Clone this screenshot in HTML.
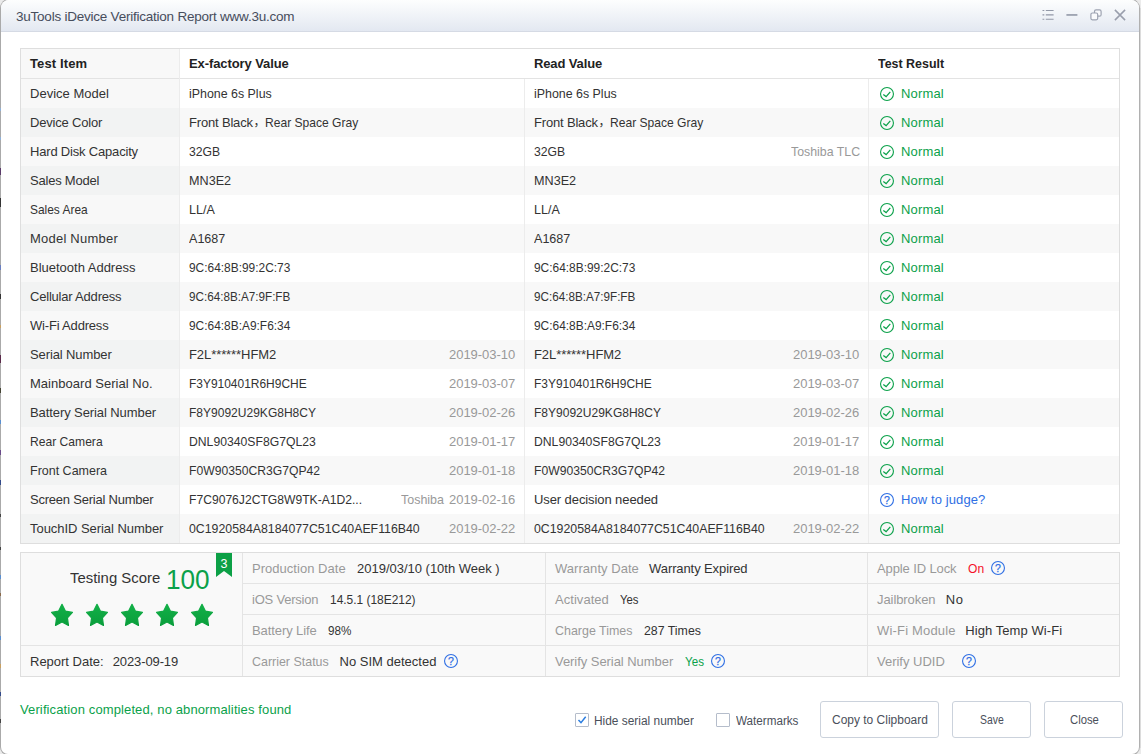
<!DOCTYPE html>
<html><head><meta charset="utf-8"><title>3uTools iDevice Verification Report</title>
<style>
*{margin:0;padding:0;box-sizing:border-box}
html,body{width:1141px;height:754px;overflow:hidden;background:#ebebeb}
body{font-family:"Liberation Sans","Noto Sans CJK SC",sans-serif;font-size:13px;color:#333;position:relative}
.abs,.t{position:absolute}
.t{white-space:nowrap;transform-origin:0 0}
#mk i{position:absolute;left:0;width:1px;display:block}
#win{left:0;top:-1px;width:1140px;height:756px;background:#fff;border:1px solid #aaa;border-right-color:#b0b0b0;border-radius:9px 9px 8px 8px;overflow:hidden}
#rs{left:1140px;top:8px;width:1px;height:740px;background:#dcdcdc}
#tb{left:0;top:0;width:1138px;height:32px;background:linear-gradient(#fdfefe,#e3e8f1);border-bottom:1px solid #d5dae4}
.row{position:absolute;left:21px;width:1098px;height:29px}
.c1{position:absolute;left:0;top:0;width:158px;height:29px}
.hl{position:absolute;background:#e3e3e3;height:1px}
.vl{position:absolute;background:#ececec;width:1px}
.btn{position:absolute;top:701px;height:37px;border:1px solid #cbd2dc;border-radius:3px;background:#fff}
.cb{position:absolute;top:713px;width:14px;height:14px;border:1px solid #b5bdcb;background:#fff;border-radius:1px}
</style></head><body>
<div class="abs" id="win"><div class="abs" id="tb"></div></div><div class="abs" id="rs"></div>
<div id="mk"><i style="top:108px;height:3px;background:#8fb0d8"></i><i style="top:137px;height:3px;background:#8fb0d8"></i><i style="top:168px;height:7px;background:#5a3a6a"></i><i style="top:198px;height:9px;background:#333"></i><i style="top:265px;height:5px;background:#6a7fc0"></i><i style="top:294px;height:5px;background:#333"></i><i style="top:325px;height:3px;background:#c9a060"></i><i style="top:355px;height:8px;background:#5a2a4a"></i><i style="top:388px;height:5px;background:#443"></i><i style="top:420px;height:4px;background:#5a8fd0"></i><i style="top:450px;height:5px;background:#6a4a8a"></i><i style="top:480px;height:5px;background:#334a8a"></i><i style="top:514px;height:3px;background:#444"></i><i style="top:547px;height:3px;background:#444"></i><i style="top:575px;height:4px;background:#5a8fd0"></i><i style="top:593px;height:3px;background:#8a6a4a"></i><i style="top:636px;height:4px;background:#5a8fd0"></i><i style="top:664px;height:4px;background:#c9a060"></i><i style="top:692px;height:4px;background:#334a8a"></i><i style="top:719px;height:4px;background:#444"></i></div>

<svg class="abs" style="left:1036px;top:0" width="100" height="32" viewBox="1036 0 100 32" fill="none" stroke="#9298a7">
<g stroke-width="1.1"><path d="M1045.8 10.5H1053.6M1045.8 14.9H1053.6M1045.8 19.3H1053.6"/><path d="M1042.5 10.5h1.8M1042.5 14.9h1.8M1042.5 19.3h1.8"/></g>
<path d="M1066.4 14.95H1077.4" stroke-width="1.6"/>
<g stroke="#9da3b1" stroke-width="1.2"><rect x="1094.5" y="9.9" width="6.6" height="6.3" rx="1.5" fill="#f8f9fb"/>
<rect x="1090.9" y="13" width="6.8" height="6.8" rx="1.5" fill="#fafbfc"/></g>
<path d="M1114.9 9.9L1125.1 20.1M1125.1 9.9L1114.9 20.1" stroke="#999eac" stroke-width="1.5"/>
</svg>
<div class="abs" style="left:20px;top:48px;width:1100px;height:496px;border:1px solid #dedede"></div>
<div class="abs" style="left:21px;top:49px;width:158px;height:29px;background:#f8f8f8"></div>
<div class="row" style="top:79px;background:#fff"><div class="c1" style="background:#f8f8f8"></div></div>
<div class="row" style="top:108px;background:#f8f8f8"><div class="c1" style="background:#f2f3f3"></div></div>
<div class="row" style="top:137px;background:#fff"><div class="c1" style="background:#f8f8f8"></div></div>
<div class="row" style="top:166px;background:#f8f8f8"><div class="c1" style="background:#f2f3f3"></div></div>
<div class="row" style="top:195px;background:#fff"><div class="c1" style="background:#f8f8f8"></div></div>
<div class="row" style="top:224px;background:#f8f8f8"><div class="c1" style="background:#f2f3f3"></div></div>
<div class="row" style="top:253px;background:#fff"><div class="c1" style="background:#f8f8f8"></div></div>
<div class="row" style="top:282px;background:#f8f8f8"><div class="c1" style="background:#f2f3f3"></div></div>
<div class="row" style="top:311px;background:#fff"><div class="c1" style="background:#f8f8f8"></div></div>
<div class="row" style="top:340px;background:#f8f8f8"><div class="c1" style="background:#f2f3f3"></div></div>
<div class="row" style="top:369px;background:#fff"><div class="c1" style="background:#f8f8f8"></div></div>
<div class="row" style="top:398px;background:#f8f8f8"><div class="c1" style="background:#f2f3f3"></div></div>
<div class="row" style="top:427px;background:#fff"><div class="c1" style="background:#f8f8f8"></div></div>
<div class="row" style="top:456px;background:#f8f8f8"><div class="c1" style="background:#f2f3f3"></div></div>
<div class="row" style="top:485px;background:#fff"><div class="c1" style="background:#f8f8f8"></div></div>
<div class="row" style="top:514px;background:#f8f8f8"><div class="c1" style="background:#f2f3f3"></div></div>
<div class="hl" style="left:21px;top:78px;width:1098px"></div>
<div class="vl" style="left:179px;top:49px;height:494px"></div>
<div class="vl" style="left:524px;top:79px;height:464px"></div>
<div class="vl" style="left:868px;top:79px;height:464px"></div>
<svg class="abs" style="left:879px;top:86px" width="16" height="16" viewBox="0 0 16 16" fill="none" stroke="#0ba14a"><circle cx="8" cy="8" r="6.45" stroke-width="1.1"/><path d="M4.3 8.6L7.1 10.6L11.3 5.9" stroke-width="1.25"/></svg>
<svg class="abs" style="left:879px;top:115px" width="16" height="16" viewBox="0 0 16 16" fill="none" stroke="#0ba14a"><circle cx="8" cy="8" r="6.45" stroke-width="1.1"/><path d="M4.3 8.6L7.1 10.6L11.3 5.9" stroke-width="1.25"/></svg>
<svg class="abs" style="left:879px;top:144px" width="16" height="16" viewBox="0 0 16 16" fill="none" stroke="#0ba14a"><circle cx="8" cy="8" r="6.45" stroke-width="1.1"/><path d="M4.3 8.6L7.1 10.6L11.3 5.9" stroke-width="1.25"/></svg>
<svg class="abs" style="left:879px;top:173px" width="16" height="16" viewBox="0 0 16 16" fill="none" stroke="#0ba14a"><circle cx="8" cy="8" r="6.45" stroke-width="1.1"/><path d="M4.3 8.6L7.1 10.6L11.3 5.9" stroke-width="1.25"/></svg>
<svg class="abs" style="left:879px;top:202px" width="16" height="16" viewBox="0 0 16 16" fill="none" stroke="#0ba14a"><circle cx="8" cy="8" r="6.45" stroke-width="1.1"/><path d="M4.3 8.6L7.1 10.6L11.3 5.9" stroke-width="1.25"/></svg>
<svg class="abs" style="left:879px;top:231px" width="16" height="16" viewBox="0 0 16 16" fill="none" stroke="#0ba14a"><circle cx="8" cy="8" r="6.45" stroke-width="1.1"/><path d="M4.3 8.6L7.1 10.6L11.3 5.9" stroke-width="1.25"/></svg>
<svg class="abs" style="left:879px;top:260px" width="16" height="16" viewBox="0 0 16 16" fill="none" stroke="#0ba14a"><circle cx="8" cy="8" r="6.45" stroke-width="1.1"/><path d="M4.3 8.6L7.1 10.6L11.3 5.9" stroke-width="1.25"/></svg>
<svg class="abs" style="left:879px;top:289px" width="16" height="16" viewBox="0 0 16 16" fill="none" stroke="#0ba14a"><circle cx="8" cy="8" r="6.45" stroke-width="1.1"/><path d="M4.3 8.6L7.1 10.6L11.3 5.9" stroke-width="1.25"/></svg>
<svg class="abs" style="left:879px;top:318px" width="16" height="16" viewBox="0 0 16 16" fill="none" stroke="#0ba14a"><circle cx="8" cy="8" r="6.45" stroke-width="1.1"/><path d="M4.3 8.6L7.1 10.6L11.3 5.9" stroke-width="1.25"/></svg>
<svg class="abs" style="left:879px;top:347px" width="16" height="16" viewBox="0 0 16 16" fill="none" stroke="#0ba14a"><circle cx="8" cy="8" r="6.45" stroke-width="1.1"/><path d="M4.3 8.6L7.1 10.6L11.3 5.9" stroke-width="1.25"/></svg>
<svg class="abs" style="left:879px;top:376px" width="16" height="16" viewBox="0 0 16 16" fill="none" stroke="#0ba14a"><circle cx="8" cy="8" r="6.45" stroke-width="1.1"/><path d="M4.3 8.6L7.1 10.6L11.3 5.9" stroke-width="1.25"/></svg>
<svg class="abs" style="left:879px;top:405px" width="16" height="16" viewBox="0 0 16 16" fill="none" stroke="#0ba14a"><circle cx="8" cy="8" r="6.45" stroke-width="1.1"/><path d="M4.3 8.6L7.1 10.6L11.3 5.9" stroke-width="1.25"/></svg>
<svg class="abs" style="left:879px;top:434px" width="16" height="16" viewBox="0 0 16 16" fill="none" stroke="#0ba14a"><circle cx="8" cy="8" r="6.45" stroke-width="1.1"/><path d="M4.3 8.6L7.1 10.6L11.3 5.9" stroke-width="1.25"/></svg>
<svg class="abs" style="left:879px;top:463px" width="16" height="16" viewBox="0 0 16 16" fill="none" stroke="#0ba14a"><circle cx="8" cy="8" r="6.45" stroke-width="1.1"/><path d="M4.3 8.6L7.1 10.6L11.3 5.9" stroke-width="1.25"/></svg>
<svg class="abs" style="left:879px;top:492px" width="16" height="16" viewBox="0 0 16 16"><circle cx="8" cy="8" r="6.45" fill="none" stroke="#2f6fe4" stroke-width="1.1"/><text x="8" y="11.7" font-size="10.5" text-anchor="middle" fill="#2f6fe4" stroke="#2f6fe4" stroke-width="0.25" font-family="Liberation Sans, sans-serif">?</text></svg>
<svg class="abs" style="left:879px;top:521px" width="16" height="16" viewBox="0 0 16 16" fill="none" stroke="#0ba14a"><circle cx="8" cy="8" r="6.45" stroke-width="1.1"/><path d="M4.3 8.6L7.1 10.6L11.3 5.9" stroke-width="1.25"/></svg>
<div class="abs" style="left:20px;top:552px;width:1100px;height:125px;border:1px solid #dedede;background:#f9f9f9"></div>
<div class="hl" style="left:243px;top:583px;width:876px;background:#e4e4e4"></div>
<div class="hl" style="left:243px;top:614px;width:876px;background:#e4e4e4"></div>
<div class="hl" style="left:21px;top:645px;width:1098px;background:#e4e4e4"></div>
<div class="vl" style="left:242px;top:553px;height:123px;background:#e4e4e4"></div>
<div class="vl" style="left:545px;top:553px;height:123px;background:#e4e4e4"></div>
<div class="vl" style="left:867px;top:553px;height:123px;background:#e4e4e4"></div>
<svg class="abs" style="left:216px;top:553px" width="16" height="24" viewBox="0 0 16 24"><path d="M0 0H16V24L8 18L0 24Z" fill="#0ca046"/><text x="8" y="15" font-size="12.5" fill="#fff" text-anchor="middle" font-family="Liberation Sans, sans-serif">3</text></svg>
<svg class="abs" style="left:0;top:0" width="0" height="0"><defs><linearGradient id="sg" gradientUnits="userSpaceOnUse" x1="0" y1="0" x2="0" y2="26"><stop offset="0" stop-color="#13b148"/><stop offset="1" stop-color="#089b3a"/></linearGradient></defs></svg>
<svg class="abs" style="left:50px;top:602.9px" width="24" height="26" viewBox="0 0 24 26"><path d="M12.00 1.30L15.36 8.08L22.46 9.38L17.44 14.88L18.47 22.47L12.00 19.08L5.53 22.47L6.56 14.88L1.54 9.38L8.64 8.08Z" fill="url(#sg)" stroke="url(#sg)" stroke-width="1.2" stroke-linejoin="round"/></svg>
<svg class="abs" style="left:85px;top:602.9px" width="24" height="26" viewBox="0 0 24 26"><path d="M12.00 1.30L15.36 8.08L22.46 9.38L17.44 14.88L18.47 22.47L12.00 19.08L5.53 22.47L6.56 14.88L1.54 9.38L8.64 8.08Z" fill="url(#sg)" stroke="url(#sg)" stroke-width="1.2" stroke-linejoin="round"/></svg>
<svg class="abs" style="left:120px;top:602.9px" width="24" height="26" viewBox="0 0 24 26"><path d="M12.00 1.30L15.36 8.08L22.46 9.38L17.44 14.88L18.47 22.47L12.00 19.08L5.53 22.47L6.56 14.88L1.54 9.38L8.64 8.08Z" fill="url(#sg)" stroke="url(#sg)" stroke-width="1.2" stroke-linejoin="round"/></svg>
<svg class="abs" style="left:155px;top:602.9px" width="24" height="26" viewBox="0 0 24 26"><path d="M12.00 1.30L15.36 8.08L22.46 9.38L17.44 14.88L18.47 22.47L12.00 19.08L5.53 22.47L6.56 14.88L1.54 9.38L8.64 8.08Z" fill="url(#sg)" stroke="url(#sg)" stroke-width="1.2" stroke-linejoin="round"/></svg>
<svg class="abs" style="left:190px;top:602.9px" width="24" height="26" viewBox="0 0 24 26"><path d="M12.00 1.30L15.36 8.08L22.46 9.38L17.44 14.88L18.47 22.47L12.00 19.08L5.53 22.47L6.56 14.88L1.54 9.38L8.64 8.08Z" fill="url(#sg)" stroke="url(#sg)" stroke-width="1.2" stroke-linejoin="round"/></svg>
<svg class="abs" style="left:443px;top:653px" width="16" height="16" viewBox="0 0 16 16"><circle cx="8" cy="8" r="6.45" fill="none" stroke="#2f6fe4" stroke-width="1.1"/><text x="8" y="11.7" font-size="10.5" text-anchor="middle" fill="#2f6fe4" stroke="#2f6fe4" stroke-width="0.25" font-family="Liberation Sans, sans-serif">?</text></svg>
<svg class="abs" style="left:710px;top:653px" width="16" height="16" viewBox="0 0 16 16"><circle cx="8" cy="8" r="6.45" fill="none" stroke="#2f6fe4" stroke-width="1.1"/><text x="8" y="11.7" font-size="10.5" text-anchor="middle" fill="#2f6fe4" stroke="#2f6fe4" stroke-width="0.25" font-family="Liberation Sans, sans-serif">?</text></svg>
<svg class="abs" style="left:990px;top:560px" width="16" height="16" viewBox="0 0 16 16"><circle cx="8" cy="8" r="6.45" fill="none" stroke="#2f6fe4" stroke-width="1.1"/><text x="8" y="11.7" font-size="10.5" text-anchor="middle" fill="#2f6fe4" stroke="#2f6fe4" stroke-width="0.25" font-family="Liberation Sans, sans-serif">?</text></svg>
<svg class="abs" style="left:961px;top:653px" width="16" height="16" viewBox="0 0 16 16"><circle cx="8" cy="8" r="6.45" fill="none" stroke="#2f6fe4" stroke-width="1.1"/><text x="8" y="11.7" font-size="10.5" text-anchor="middle" fill="#2f6fe4" stroke="#2f6fe4" stroke-width="0.25" font-family="Liberation Sans, sans-serif">?</text></svg>
<div class="cb" style="left:575px"><svg width="12" height="12" viewBox="0 0 12 12" style="position:absolute;left:0;top:0"><path d="M2.5 6L5 8.7L9.7 2.8" fill="none" stroke="#2b7de0" stroke-width="1.5"/></svg></div>
<div class="cb" style="left:716px"></div>
<div class="btn" style="left:820px;width:119px"></div>
<div class="btn" style="left:952px;width:79px"></div>
<div class="btn" style="left:1044px;width:79px"></div>
<div class="t" style="left:16.00px;top:7.90px;line-height:18px;height:18px;font-size:13.5px;color:#474d5c;letter-spacing:-0.230px">3uTools iDevice Verification Report www.3u.com</div>
<div class="t" style="left:30.00px;top:55.00px;line-height:17px;height:17px;font-weight:bold;color:#222;letter-spacing:0.132px">Test Item</div>
<div class="t" style="left:189.00px;top:55.00px;line-height:17px;height:17px;font-weight:bold;color:#222;letter-spacing:-0.088px">Ex-factory Value</div>
<div class="t" style="left:534.00px;top:55.00px;line-height:17px;height:17px;font-weight:bold;color:#222;letter-spacing:-0.126px">Read Value</div>
<div class="t" style="left:878.00px;top:55.00px;line-height:17px;height:17px;font-weight:bold;color:#222;transform:scaleX(0.9573)">Test Result</div>
<div class="t" style="left:30.00px;top:85.00px;line-height:17px;height:17px;letter-spacing:0.012px">Device Model</div>
<div class="t" style="left:189.00px;top:85.00px;line-height:17px;height:17px;transform:scaleX(0.9539)">iPhone 6s Plus</div>
<div class="t" style="left:534.00px;top:85.00px;line-height:17px;height:17px;transform:scaleX(0.9539)">iPhone 6s Plus</div>
<div class="t" style="left:901.00px;top:85.00px;line-height:17px;height:17px;color:#0ba14a;letter-spacing:0.159px">Normal</div>
<div class="t" style="left:30.00px;top:114.00px;line-height:17px;height:17px;letter-spacing:-0.189px">Device Color</div>
<div class="t" style="left:189.00px;top:114.00px;line-height:17px;height:17px;letter-spacing:-0.174px">Front Black</div>
<div class="t" style="left:253.40px;top:114.40px;line-height:16px;height:16px;font-size:12px">，</div>
<div class="t" style="left:264.67px;top:114.00px;line-height:17px;height:17px;transform:scaleX(0.9286)">Rear Space Gray</div>
<div class="t" style="left:534.00px;top:114.00px;line-height:17px;height:17px;letter-spacing:-0.174px">Front Black</div>
<div class="t" style="left:598.40px;top:114.40px;line-height:16px;height:16px;font-size:12px">，</div>
<div class="t" style="left:609.67px;top:114.00px;line-height:17px;height:17px;transform:scaleX(0.9286)">Rear Space Gray</div>
<div class="t" style="left:901.00px;top:114.00px;line-height:17px;height:17px;color:#0ba14a;letter-spacing:0.159px">Normal</div>
<div class="t" style="left:30.00px;top:143.00px;line-height:17px;height:17px;letter-spacing:-0.186px">Hard Disk Capacity</div>
<div class="t" style="left:189.00px;top:143.00px;line-height:17px;height:17px;transform:scaleX(0.9364)">32GB</div>
<div class="t" style="left:534.00px;top:143.00px;line-height:17px;height:17px;transform:scaleX(0.9364)">32GB</div>
<div class="t" style="left:790.50px;top:143.00px;line-height:17px;height:17px;color:#999;transform:scaleX(0.9492)">Toshiba TLC</div>
<div class="t" style="left:901.00px;top:143.00px;line-height:17px;height:17px;color:#0ba14a;letter-spacing:0.159px">Normal</div>
<div class="t" style="left:30.00px;top:172.00px;line-height:17px;height:17px;letter-spacing:-0.215px">Sales Model</div>
<div class="t" style="left:189.03px;top:172.00px;line-height:17px;height:17px;transform:scaleX(0.9711)">MN3E2</div>
<div class="t" style="left:534.03px;top:172.00px;line-height:17px;height:17px;transform:scaleX(0.9711)">MN3E2</div>
<div class="t" style="left:901.00px;top:172.00px;line-height:17px;height:17px;color:#0ba14a;letter-spacing:0.159px">Normal</div>
<div class="t" style="left:30.00px;top:201.00px;line-height:17px;height:17px;transform:scaleX(0.9167)">Sales Area</div>
<div class="t" style="left:189.04px;top:201.00px;line-height:17px;height:17px;transform:scaleX(0.9627)">LL/A</div>
<div class="t" style="left:534.04px;top:201.00px;line-height:17px;height:17px;transform:scaleX(0.9627)">LL/A</div>
<div class="t" style="left:901.00px;top:201.00px;line-height:17px;height:17px;color:#0ba14a;letter-spacing:0.159px">Normal</div>
<div class="t" style="left:30.00px;top:230.00px;line-height:17px;height:17px;letter-spacing:0.225px">Model Number</div>
<div class="t" style="left:189.00px;top:230.00px;line-height:17px;height:17px;transform:scaleX(0.9663)">A1687</div>
<div class="t" style="left:534.00px;top:230.00px;line-height:17px;height:17px;transform:scaleX(0.9663)">A1687</div>
<div class="t" style="left:901.00px;top:230.00px;line-height:17px;height:17px;color:#0ba14a;letter-spacing:0.159px">Normal</div>
<div class="t" style="left:30.00px;top:259.00px;line-height:17px;height:17px;letter-spacing:-0.008px">Bluetooth Address</div>
<div class="t" style="left:189.00px;top:259.00px;line-height:17px;height:17px;transform:scaleX(0.9162)">9C:64:8B:99:2C:73</div>
<div class="t" style="left:534.00px;top:259.00px;line-height:17px;height:17px;transform:scaleX(0.9162)">9C:64:8B:99:2C:73</div>
<div class="t" style="left:901.00px;top:259.00px;line-height:17px;height:17px;color:#0ba14a;letter-spacing:0.159px">Normal</div>
<div class="t" style="left:30.00px;top:288.00px;line-height:17px;height:17px;letter-spacing:-0.205px">Cellular Address</div>
<div class="t" style="left:189.00px;top:288.00px;line-height:17px;height:17px;transform:scaleX(0.8987)">9C:64:8B:A7:9F:FB</div>
<div class="t" style="left:534.00px;top:288.00px;line-height:17px;height:17px;transform:scaleX(0.8987)">9C:64:8B:A7:9F:FB</div>
<div class="t" style="left:901.00px;top:288.00px;line-height:17px;height:17px;color:#0ba14a;letter-spacing:0.159px">Normal</div>
<div class="t" style="left:30.00px;top:317.00px;line-height:17px;height:17px;letter-spacing:-0.185px">Wi-Fi Address</div>
<div class="t" style="left:189.00px;top:317.00px;line-height:17px;height:17px;transform:scaleX(0.9163)">9C:64:8B:A9:F6:34</div>
<div class="t" style="left:534.00px;top:317.00px;line-height:17px;height:17px;transform:scaleX(0.9163)">9C:64:8B:A9:F6:34</div>
<div class="t" style="left:901.00px;top:317.00px;line-height:17px;height:17px;color:#0ba14a;letter-spacing:0.159px">Normal</div>
<div class="t" style="left:30.00px;top:346.00px;line-height:17px;height:17px;letter-spacing:-0.113px">Serial Number</div>
<div class="t" style="left:189.00px;top:346.00px;line-height:17px;height:17px;letter-spacing:-0.076px">F2L******HFM2</div>
<div class="t" style="left:534.00px;top:346.00px;line-height:17px;height:17px;letter-spacing:-0.076px">F2L******HFM2</div>
<div class="t" style="left:449.00px;top:346.00px;line-height:17px;height:17px;color:#999;letter-spacing:-0.030px">2019-03-10</div>
<div class="t" style="left:793.00px;top:346.00px;line-height:17px;height:17px;color:#999;letter-spacing:-0.030px">2019-03-10</div>
<div class="t" style="left:901.00px;top:346.00px;line-height:17px;height:17px;color:#0ba14a;letter-spacing:0.159px">Normal</div>
<div class="t" style="left:30.00px;top:375.00px;line-height:17px;height:17px;letter-spacing:0.026px">Mainboard Serial No.</div>
<div class="t" style="left:189.08px;top:375.00px;line-height:17px;height:17px;transform:scaleX(0.9196)">F3Y910401R6H9CHE</div>
<div class="t" style="left:534.08px;top:375.00px;line-height:17px;height:17px;transform:scaleX(0.9196)">F3Y910401R6H9CHE</div>
<div class="t" style="left:449.00px;top:375.00px;line-height:17px;height:17px;color:#999;letter-spacing:-0.030px">2019-03-07</div>
<div class="t" style="left:793.00px;top:375.00px;line-height:17px;height:17px;color:#999;letter-spacing:-0.030px">2019-03-07</div>
<div class="t" style="left:901.00px;top:375.00px;line-height:17px;height:17px;color:#0ba14a;letter-spacing:0.159px">Normal</div>
<div class="t" style="left:30.00px;top:404.00px;line-height:17px;height:17px;letter-spacing:-0.088px">Battery Serial Number</div>
<div class="t" style="left:189.07px;top:404.00px;line-height:17px;height:17px;transform:scaleX(0.9251)">F8Y9092U29KG8H8CY</div>
<div class="t" style="left:534.07px;top:404.00px;line-height:17px;height:17px;transform:scaleX(0.9251)">F8Y9092U29KG8H8CY</div>
<div class="t" style="left:449.00px;top:404.00px;line-height:17px;height:17px;color:#999;letter-spacing:-0.030px">2019-02-26</div>
<div class="t" style="left:793.00px;top:404.00px;line-height:17px;height:17px;color:#999;letter-spacing:-0.030px">2019-02-26</div>
<div class="t" style="left:901.00px;top:404.00px;line-height:17px;height:17px;color:#0ba14a;letter-spacing:0.159px">Normal</div>
<div class="t" style="left:30.07px;top:433.00px;line-height:17px;height:17px;transform:scaleX(0.9306)">Rear Camera</div>
<div class="t" style="left:189.06px;top:433.00px;line-height:17px;height:17px;transform:scaleX(0.9379)">DNL90340SF8G7QL23</div>
<div class="t" style="left:534.06px;top:433.00px;line-height:17px;height:17px;transform:scaleX(0.9379)">DNL90340SF8G7QL23</div>
<div class="t" style="left:449.00px;top:433.00px;line-height:17px;height:17px;color:#999;letter-spacing:-0.030px">2019-01-17</div>
<div class="t" style="left:793.00px;top:433.00px;line-height:17px;height:17px;color:#999;letter-spacing:-0.030px">2019-01-17</div>
<div class="t" style="left:901.00px;top:433.00px;line-height:17px;height:17px;color:#0ba14a;letter-spacing:0.159px">Normal</div>
<div class="t" style="left:30.04px;top:462.00px;line-height:17px;height:17px;transform:scaleX(0.9605)">Front Camera</div>
<div class="t" style="left:189.07px;top:462.00px;line-height:17px;height:17px;transform:scaleX(0.9349)">F0W90350CR3G7QP42</div>
<div class="t" style="left:534.07px;top:462.00px;line-height:17px;height:17px;transform:scaleX(0.9349)">F0W90350CR3G7QP42</div>
<div class="t" style="left:449.00px;top:462.00px;line-height:17px;height:17px;color:#999;letter-spacing:-0.030px">2019-01-18</div>
<div class="t" style="left:793.00px;top:462.00px;line-height:17px;height:17px;color:#999;letter-spacing:-0.030px">2019-01-18</div>
<div class="t" style="left:901.00px;top:462.00px;line-height:17px;height:17px;color:#0ba14a;letter-spacing:0.159px">Normal</div>
<div class="t" style="left:30.00px;top:491.00px;line-height:17px;height:17px;letter-spacing:-0.224px">Screen Serial Number</div>
<div class="t" style="left:189.07px;top:491.00px;line-height:17px;height:17px;transform:scaleX(0.9323)">F7C9076J2CTG8W9TK-A1D2...</div>
<div class="t" style="left:534.00px;top:491.00px;line-height:17px;height:17px;letter-spacing:-0.090px">User decision needed</div>
<div class="t" style="left:400.50px;top:491.00px;line-height:17px;height:17px;color:#999;transform:scaleX(0.9588)">Toshiba</div>
<div class="t" style="left:449.00px;top:491.00px;line-height:17px;height:17px;color:#999;letter-spacing:-0.030px">2019-02-16</div>
<div class="t" style="left:901.00px;top:491.00px;line-height:17px;height:17px;color:#2f6fe4;letter-spacing:0.102px">How to judge?</div>
<div class="t" style="left:30.00px;top:520.00px;line-height:17px;height:17px;letter-spacing:-0.048px">TouchID Serial Number</div>
<div class="t" style="left:189.00px;top:520.00px;line-height:17px;height:17px;transform:scaleX(0.9481)">0C1920584A8184077C51C40AEF116B40</div>
<div class="t" style="left:534.00px;top:520.00px;line-height:17px;height:17px;transform:scaleX(0.9481)">0C1920584A8184077C51C40AEF116B40</div>
<div class="t" style="left:449.00px;top:520.00px;line-height:17px;height:17px;color:#999;letter-spacing:-0.030px">2019-02-22</div>
<div class="t" style="left:793.00px;top:520.00px;line-height:17px;height:17px;color:#999;letter-spacing:-0.030px">2019-02-22</div>
<div class="t" style="left:901.00px;top:520.00px;line-height:17px;height:17px;color:#0ba14a;letter-spacing:0.159px">Normal</div>
<div class="t" style="left:69.70px;top:567.70px;line-height:20px;height:20px;font-size:15.5px;transform:scaleX(0.9605)">Testing Score</div>
<div class="t" style="left:165.56px;top:562.70px;line-height:35px;height:35px;font-size:27px;color:#0ba14a;transform:scaleX(0.9683)">100</div>
<div class="t" style="left:30.00px;top:653.00px;line-height:17px;height:17px;letter-spacing:-0.008px">Report Date:</div>
<div class="t" style="left:112.70px;top:653.00px;line-height:17px;height:17px;letter-spacing:-0.108px">2023-09-19</div>
<div class="t" style="left:252.00px;top:560.00px;line-height:17px;height:17px;color:#999;letter-spacing:0.029px">Production Date</div>
<div class="t" style="left:357.00px;top:560.00px;line-height:17px;height:17px;letter-spacing:-0.010px">2019/03/10 (10th Week )</div>
<div class="t" style="left:252.00px;top:591.00px;line-height:17px;height:17px;color:#999;letter-spacing:-0.221px">iOS Version</div>
<div class="t" style="left:330.00px;top:591.00px;line-height:17px;height:17px;transform:scaleX(0.9181)">14.5.1 (18E212)</div>
<div class="t" style="left:252.00px;top:622.00px;line-height:17px;height:17px;color:#999;letter-spacing:-0.093px">Battery Life</div>
<div class="t" style="left:327.50px;top:622.00px;line-height:17px;height:17px;transform:scaleX(0.8995)">98%</div>
<div class="t" style="left:252.00px;top:653.00px;line-height:17px;height:17px;color:#999;transform:scaleX(0.9567)">Carrier Status</div>
<div class="t" style="left:339.50px;top:653.00px;line-height:17px;height:17px;letter-spacing:0.007px">No SIM detected</div>
<div class="t" style="left:555.00px;top:560.00px;line-height:17px;height:17px;color:#999;letter-spacing:0.043px">Warranty Date</div>
<div class="t" style="left:649.10px;top:560.00px;line-height:17px;height:17px;letter-spacing:-0.101px">Warranty Expired</div>
<div class="t" style="left:555.00px;top:591.00px;line-height:17px;height:17px;color:#999;letter-spacing:0.045px">Activated</div>
<div class="t" style="left:619.70px;top:591.00px;line-height:17px;height:17px;transform:scaleX(0.8707)">Yes</div>
<div class="t" style="left:555.00px;top:622.00px;line-height:17px;height:17px;color:#999;transform:scaleX(0.9577)">Charge Times</div>
<div class="t" style="left:644.00px;top:622.00px;line-height:17px;height:17px;transform:scaleX(0.9488)">287 Times</div>
<div class="t" style="left:555.00px;top:653.00px;line-height:17px;height:17px;color:#999;letter-spacing:-0.052px">Verify Serial Number</div>
<div class="t" style="left:684.70px;top:653.00px;line-height:17px;height:17px;color:#0ba14a;transform:scaleX(0.8937)">Yes</div>
<div class="t" style="left:877.00px;top:560.00px;line-height:17px;height:17px;color:#999;letter-spacing:-0.111px">Apple ID Lock</div>
<div class="t" style="left:967.90px;top:560.00px;line-height:17px;height:17px;color:#f5102a;transform:scaleX(0.9292)">On</div>
<div class="t" style="left:877.00px;top:591.00px;line-height:17px;height:17px;color:#999;letter-spacing:-0.081px">Jailbroken</div>
<div class="t" style="left:945.70px;top:591.00px;line-height:17px;height:17px;letter-spacing:0.712px">No</div>
<div class="t" style="left:877.00px;top:622.00px;line-height:17px;height:17px;color:#999;letter-spacing:0.179px">Wi-Fi Module</div>
<div class="t" style="left:965.30px;top:622.00px;line-height:17px;height:17px;letter-spacing:0.066px">High Temp Wi-Fi</div>
<div class="t" style="left:877.00px;top:653.00px;line-height:17px;height:17px;color:#999;letter-spacing:-0.011px">Verify UDID</div>
<div class="t" style="left:20.00px;top:701.00px;line-height:17px;height:17px;color:#0ba14a;letter-spacing:0.120px">Verification completed, no abnormalities found</div>
<div class="t" style="left:594.35px;top:712.80px;line-height:16px;height:16px;font-size:12.5px;color:#4a4f5a;transform:scaleX(0.9523)">Hide serial number</div>
<div class="t" style="left:735.80px;top:712.80px;line-height:16px;height:16px;font-size:12.5px;color:#4a4f5a;transform:scaleX(0.9332)">Watermarks</div>
<div class="t" style="left:832.10px;top:712.00px;line-height:16px;height:16px;font-size:12.5px;color:#4a4f5a;transform:scaleX(0.9580)">Copy to Clipboard</div>
<div class="t" style="left:979.90px;top:712.00px;line-height:16px;height:16px;font-size:12.5px;color:#4a4f5a;transform:scaleX(0.8339)">Save</div>
<div class="t" style="left:1069.60px;top:712.00px;line-height:16px;height:16px;font-size:12.5px;color:#4a4f5a;transform:scaleX(0.9030)">Close</div>
</body></html>
